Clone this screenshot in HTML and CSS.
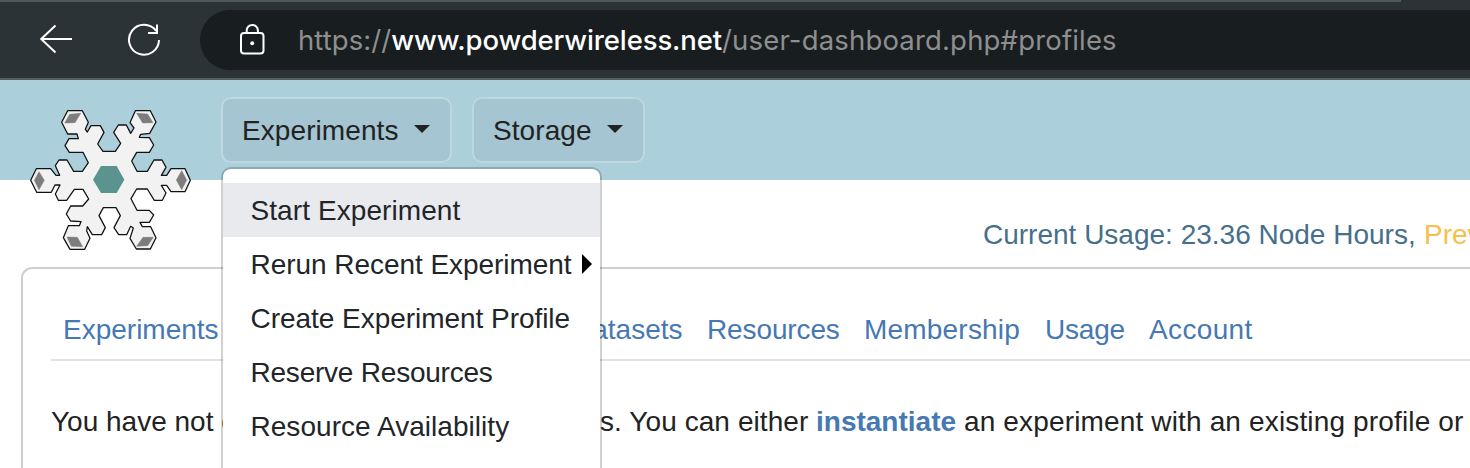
FILE: index.html
```
<!DOCTYPE html>
<html lang="en">
<head>
<meta charset="utf-8">
<title>POWDER Dashboard</title>
<link rel="stylesheet" href="styles.css">
</head>
<body>
<div class="toolbar">
  <svg class="back" viewBox="0 0 34 30"><path d="M16.5 1.5 2.2 15 16.5 28.5M2.2 15H33"/></svg>
  <svg class="reload" viewBox="0 0 36 36"><path d="M32 18A15 15 0 1 1 29.2 9M30 2.5V11H21"/></svg>
  <div class="address">
    <svg class="lock" viewBox="0 0 26 32"><rect x="2" y="10" width="22.5" height="20.5" rx="3"/><path d="M7.7 10V7.5a5.6 5.6 0 0 1 11.2 0V10"/><circle cx="13.2" cy="20.2" r="2"/></svg>
    <div class="url"><span class="scheme">https://</span><span class="host">www.powderwireless.net</span><span class="path">/user-dashboard.php#profiles</span></div>
  </div>
</div>
<header class="navbar">
  <svg class="logo" viewBox="0 0 540 495">
    <path class="flake" d="M143 47H187L205 82 196 103 202 111 213 92H241L252 112 233 147 249 169H286L302 145 281 112 295 90H319L332 115 342 99 330 83 346 47H391L408 81 389 115 362 118 358 127 388 128 401 150 388 172H350L335 198 351 229H382L402 195H426L438 217 424 241H440L453 221H495L511 256 495 290H453L440 271H424L438 294 427 316H403L382 282H350L333 311 351 346H388L401 360 388 382H360L367 395H392L408 428 391 462H349L330 430 340 399 332 394 320 419H296L282 398 301 362 288 338H250L237 362 256 398 245 419H217L202 395 200 408 210 430 194 463H150L130 428 145 392H178L183 380 152 378 139 357 152 333H188L206 312 189 283H163L140 316H115L106 297 120 270H105L94 292H50L32 256 49 221H92L108 241H119L106 212 117 195H141L161 229H187L205 203 189 172H148L135 152 147 131H175L171 117H143L125 82Z"/>
    <path class="core" d="M243 213H290L313 254 290 294H243L219 254Z"/>
    <path class="facet" d="M149 58 182 55 165 83 134 84ZM350 55 383 57 399 83 368 84ZM57 230 73 256 57 284 43 256ZM485 227 500 255 485 284 469 255ZM141 426 172 427 188 455 154 454ZM369 427 400 427 383 452 350 454Z"/>
  </svg>
  <button class="menu-button experiments">Experiments<i class="caret"></i></button>
  <button class="menu-button storage">Storage<i class="caret"></i></button>
  <div class="dropdown">
    <a class="item active"><span class="i1">Start Experiment</span></a>
    <a class="item"><span class="i2">Rerun Recent Experiment</span><i class="submenu"></i></a>
    <a class="item"><span class="i3">Create Experiment Profile</span></a>
    <a class="item"><span class="i4">Reserve Resources</span></a>
    <a class="item"><span class="i5">Resource Availability</span></a>
  </div>
</header>
<div class="usage"><span class="current">Current Usage: 23.36 Node Hours,</span><span class="previous">Prev</span></div>
<main class="panel">
  <nav class="tabs">
    <a class="tab t1">Experiments</a>
    <a class="tab t2">Datasets</a>
    <a class="tab t3">Resources</a>
    <a class="tab t4">Membership</a>
    <a class="tab t5">Usage</a>
    <a class="tab t6">Account</a>
  </nav>
  <p class="message"><span class="m1">You have not created any experiment</span><span class="m2">s. You can either</span><b class="m3">instantiate</b><span class="m4">an experiment with an existing profile or</span></p>
</main>
</body>
</html>
```
FILE: styles.css
```
* { box-sizing: border-box; }
body {
  margin: 0;
  width: 1470px;
  height: 468px;
  overflow: hidden;
  background: #fff;
  color: #212529;
  font: 28px/40px "Liberation Sans", Arial, sans-serif;
  white-space: nowrap;
}
svg { display: block; flex: none; fill: none; }
a { flex: none; }

.toolbar {
  display: flex;
  height: 80px;
  padding-top: 8px;
  border-bottom: 2px solid #555e61;
  background: linear-gradient(#4f585b, #4f585b) 0 0 / 1401px 2px no-repeat, #2b3337;
}
.back, .reload, .lock { stroke: #fff; stroke-width: 2; }
.back { width: 34px; height: 30px; margin: 16px 0 0 39px; }
.reload { width: 36px; height: 36px; margin: 14px 0 0 54px; }
.address {
  display: flex;
  flex: 1;
  height: 60px;
  margin: 2px 0 0 37px;
  border-radius: 30px 0 0 30px;
  background: #181d20;
}
.lock { width: 26px; height: 32px; margin: 13px 0 0 39px; }
.lock circle { fill: #fff; stroke: none; }
.url {
  margin-left: 33px;
  color: #8f8f8f;
  font: 27.5px/60px Inter, sans-serif;
}
.scheme { letter-spacing: .08px; }
.host { color: #fff; font-weight: 500; letter-spacing: -.12px; }
.path { letter-spacing: .17px; }

.navbar {
  position: relative;
  z-index: 1;
  display: flex;
  align-items: flex-start;
  height: 100px;
  background: #abd0dc;
}
.logo { width: 180px; height: 165px; margin: 15px 21px 0 20px; }
.flake { fill: #f2f2f2; stroke: #111; stroke-width: 3.8; stroke-linejoin: round; }
.core { fill: #5b938f; }
.facet { fill: #7d7d7d; stroke: #7d7d7d; stroke-width: 1.5; }
.menu-button {
  display: flex;
  align-items: center;
  justify-content: space-between;
  height: 66px;
  margin: 17px 20px 0 0;
  padding: 1px 20px 0 19px;
  border: 2px solid #bcd8e0;
  border-radius: 10px;
  background: #a4c5d1;
  color: #222;
  font: inherit;
  letter-spacing: .08px;
}
.experiments { width: 231px; }
.storage { width: 173px; }
.caret {
  margin-top: -3px;
  border: 8px solid transparent;
  border-top-color: #222;
  border-bottom: 0;
}
.dropdown {
  position: absolute;
  top: 87px;
  left: 221px;
  width: 381px;
  height: 301px;
  padding-top: 14px;
  border: 2px solid rgba(0, 0, 0, .18);
  border-bottom: 0;
  border-radius: 10px 10px 0 0;
  background: #fff;
  background-clip: padding-box;
}
.item {
  display: flex;
  align-items: center;
  height: 54px;
  padding: 2px 0 0 27.5px;
}
.active { background: #e9eaee; }
.i1 { letter-spacing: .08px; }
.i2 { letter-spacing: -.05px; }
.i3 { letter-spacing: -.04px; }
.i4 { letter-spacing: -.22px; }
.i5 { letter-spacing: .04px; }
.submenu {
  margin: -2px 0 0 10px;
  border: 10px solid transparent;
  border-left-color: #000;
  border-right: 0;
}

.usage {
  display: flex;
  height: 87px;
  padding: 35px 0 0 983px;
  overflow: hidden;
}
.current { flex: none; width: 441px; color: #456f8b; }
.previous { color: #f6c04c; }
.panel {
  height: 201px;
  margin-left: 21px;
  padding: 28px 0 0 28px;
  border: 2px solid #cfcfcf;
  border-width: 2px 0 0 2px;
  border-radius: 11px 0 0 0;
}
.tabs {
  display: flex;
  height: 64px;
  padding: 13px 0 0 12px;
  border-bottom: 2px solid #dee2e6;
  color: #4678b3;
}
.t1 { width: 509px; }
.t2 { width: 135px; }
.t3 { width: 157px; letter-spacing: -.12px; }
.t4 { width: 181px; letter-spacing: .2px; }
.t5 { width: 104px; letter-spacing: -.2px; }
.t6 { letter-spacing: .35px; }
.message { display: flex; margin: 41px 0 0; color: #222; }
.message > * { flex: none; }
.m1 { width: 549px; }
.m2 { width: 216px; letter-spacing: .08px; }
.m3 { width: 148px; color: #4678b3; }
.m4 { letter-spacing: .15px; }
```
